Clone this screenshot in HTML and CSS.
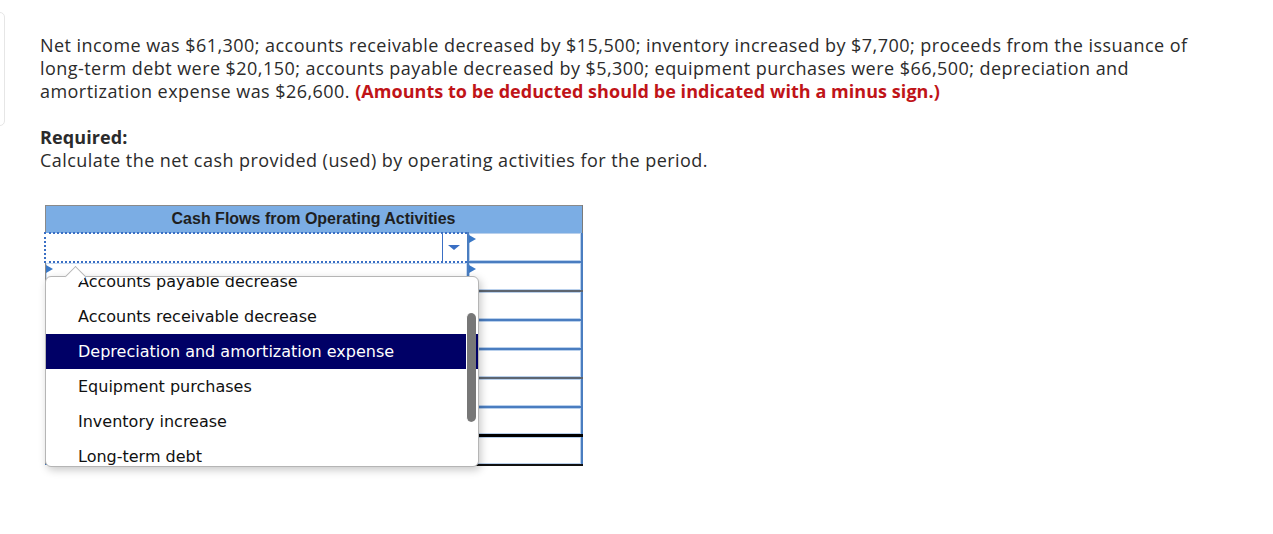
FILE: index.html
```html
<!DOCTYPE html>
<html>
<head>
<meta charset="utf-8">
<link rel="stylesheet" href="styles.css">
</head>
<body>
<div class="page">
  <aside class="edge-card"></aside>
  <main class="content">
    <p class="problem">Net income was $61,300; accounts receivable decreased by $15,500; inventory increased by $7,700; proceeds from the issuance of <span class="nowrap">long-term</span> debt were $20,150; accounts payable decreased by $5,300; equipment purchases were $66,500; depreciation and amortization expense was $26,600. <strong class="note">(Amounts to be deducted should be indicated with a minus sign.)</strong></p>
    <p class="required"><strong>Required:</strong><br>Calculate the net cash provided (used) by operating activities for the period.</p>

    <div class="sheet">
      <table class="cf">
        <colgroup><col class="c-lbl"><col class="c-amt"></colgroup>
        <thead>
          <tr><th colspan="2">Cash Flows from Operating Activities</th></tr>
        </thead>
        <tbody>
          <tr class="r1">
            <td class="lbl focus"><div class="sel"><span class="sel-val"></span><span class="sel-btn"><span class="caret"></span></span></div></td>
            <td class="amt"><span class="mark"></span><div class="box"></div></td>
          </tr>
          <tr class="r2 sep-gray">
            <td class="lbl"><span class="mark"></span><div class="box"></div></td>
            <td class="amt"><span class="mark"></span><div class="box"></div></td>
          </tr>
          <tr><td class="lbl"><div class="box"></div></td><td class="amt"><div class="box"></div></td></tr>
          <tr><td class="lbl"><div class="box"></div></td><td class="amt"><div class="box"></div></td></tr>
          <tr class="sep-gray"><td class="lbl"><div class="box"></div></td><td class="amt"><div class="box"></div></td></tr>
          <tr><td class="lbl"><div class="box"></div></td><td class="amt"><div class="box"></div></td></tr>
          <tr class="sep-black"><td class="lbl"><div class="box"></div></td><td class="amt"><div class="box"></div></td></tr>
          <tr class="last"><td class="lbl"><div class="box"></div></td><td class="amt"><div class="box"></div></td></tr>
        </tbody>
      </table>

      <div class="popup">
        <span class="notch"></span>
        <ul class="options">
          <li>Accounts payable decrease</li>
          <li>Accounts receivable decrease</li>
          <li class="active">Depreciation and amortization expense</li>
          <li>Equipment purchases</li>
          <li>Inventory increase</li>
          <li>Long-term debt</li>
        </ul>
        <span class="thumb"></span>
      </div>
    </div>
  </main>
</div>
</body>
</html>
```

FILE: styles.css
```css
html, body {
  margin: 0;
  padding: 0;
  background: #fff;
}

.page {
  display: flex;
  align-items: flex-start;
  font-family: "Open Sans", "Lato", sans-serif;
  color: #2b2b2b;
}

.edge-card {
  flex: 0 0 20px;
  height: 114px;
  margin-top: 12px;
  margin-left: -15px;
  border: 1px solid #e6e6e6;
  border-radius: 5px;
  box-sizing: border-box;
}

.content {
  margin-left: 35px;
  padding-top: 34px;
  padding-bottom: 20px;
}

.nowrap {
  white-space: nowrap;
}

.problem {
  margin: 0;
  width: 1170px;
  font-size: 18px;
  line-height: 23px;
  letter-spacing: 0.45px;
}

.note {
  color: #c01418;
  font-weight: 700;
  letter-spacing: 0.05px;
}

.required {
  margin: 23px 0 0;
  font-size: 18px;
  line-height: 23px;
  letter-spacing: 0.45px;
}

.required strong {
  font-weight: 700;
  letter-spacing: 0.1px;
}

/* sheet */
.sheet {
  position: relative;
  margin-top: 33px;
  margin-left: 4px;
  width: 537px;
  height: 262px;
}

.cf {
  border-collapse: collapse;
  width: 537px;
  table-layout: fixed;
  font-family: "Liberation Sans", Arial, sans-serif;
}

.c-lbl { width: 423px; }
.c-amt { width: 114px; }

.cf th {
  height: 27px;
  padding: 0;
  background: #7badE4;
  border-top: 1px solid #8a8a8a;
  border-left: 1px solid #8a8a8a;
  border-right: 1px solid #7a7a7a;
  color: #1f1f1f;
  font-size: 16px;
  font-weight: bold;
  text-align: center;
  box-sizing: border-box;
}

.cf td {
  height: 29px;
  padding: 0;
  position: relative;
  box-sizing: border-box;
}

.cf td.lbl {
  border-left: 1px solid #8a8a8a;
  border-bottom: 1px solid #4a7dc0;
}

.cf td.amt {
  border-left: 2px solid #4a7dc0;
  border-right: 2px solid #4a7dc0;
  border-bottom: 2px solid #4a7dc0;
}

.box {
  height: 100%;
  box-sizing: border-box;
  border: 1px solid #b9d0ec;
  background: #fff;
}

.cf td.lbl .box {
  border-color: #c8dbf2;
}

.sep-gray td.amt {
  border-bottom-color: #5d6570;
}

.sep-black td.amt {
  border-bottom: 3px solid #000;
}

.last td.amt {
  border-bottom: 2px solid #111;
}

.mark {
  position: absolute;
  left: 0;
  top: 2px;
  width: 0;
  height: 0;
  border-top: 4px solid transparent;
  border-bottom: 4px solid transparent;
  border-left: 7px solid #3a78c6;
  z-index: 1;
}

/* select cell */
.cf td.focus {
  border: 2px dotted #3a6fc4;
}

.sel {
  display: flex;
  height: 100%;
  background: #fff;
}

.sel-val {
  flex: 1;
}

.sel-btn {
  width: 24px;
  border-left: 1px solid #3a6fc4;
  display: flex;
  align-items: center;
  justify-content: center;
}

.caret {
  width: 0;
  height: 0;
  border-left: 6px solid transparent;
  border-right: 6px solid transparent;
  border-top: 5px solid #3a6fc4;
  margin-right: 2px;
}

/* popup list */
.popup {
  position: absolute;
  left: 1px;
  top: 71px;
  width: 434px;
  height: 191px;
  background: #fff;
  border: 1px solid #b5b5b5;
  border-radius: 6px;
  box-shadow: 2px 3px 8px rgba(0, 0, 0, 0.22);
  box-sizing: border-box;
  z-index: 2;
}

.notch {
  position: absolute;
  left: 22px;
  top: -8px;
  width: 14px;
  height: 14px;
  background: #fff;
  border-left: 1px solid #b5b5b5;
  border-top: 1px solid #b5b5b5;
  transform: rotate(45deg);
}

.options {
  list-style: none;
  margin: 0;
  padding: 0;
  height: 100%;
  overflow: hidden;
  border-radius: 6px;
  font-family: "DejaVu Sans", Verdana, sans-serif;
  font-size: 16px;
  color: #111;
}

.options li {
  height: 35px;
  line-height: 35px;
  padding-left: 32px;
  white-space: nowrap;
}

.options li:first-child {
  margin-top: -13px;
}

.options li.active {
  background: #000066;
  color: #fff;
}

.thumb {
  position: absolute;
  left: 420px;
  top: 36px;
  width: 9px;
  height: 109px;
  border-radius: 5px;
  background: #777;
  border-left: 1px solid #fff;
}
```
